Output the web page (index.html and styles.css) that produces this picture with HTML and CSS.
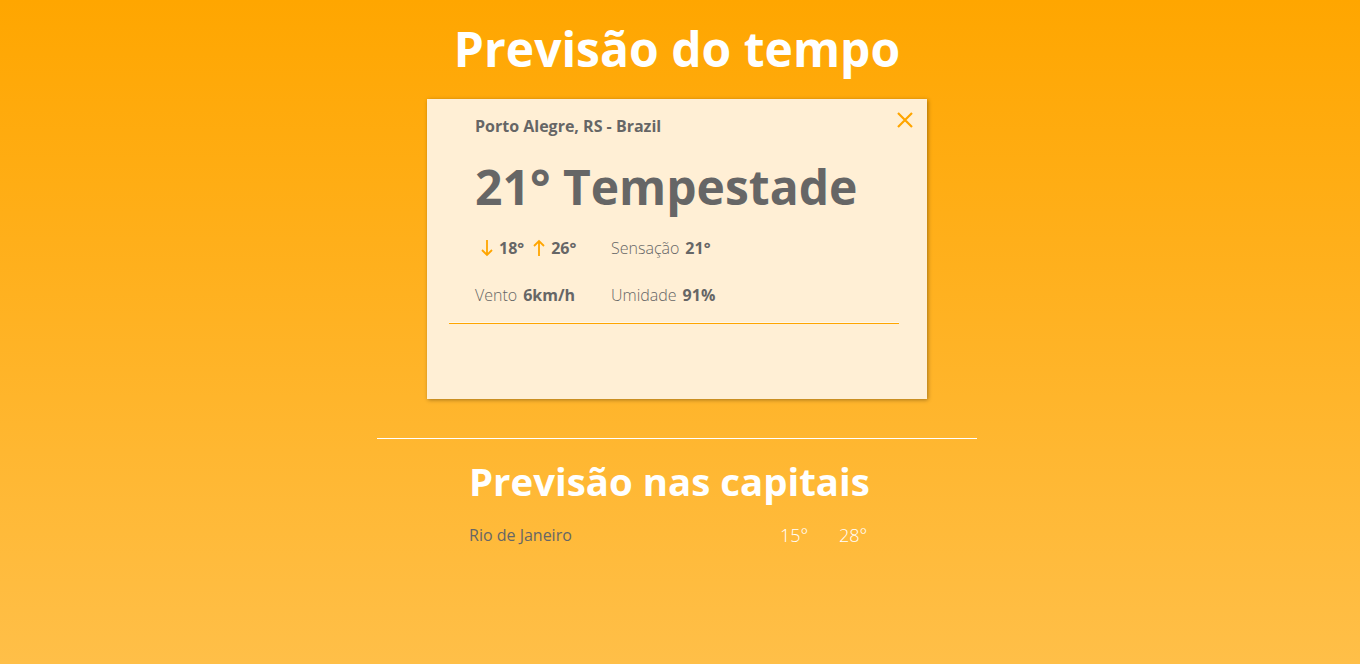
FILE: index.html
```html
<!DOCTYPE html>
<html lang="pt-BR">
<head>
<meta charset="utf-8">
<title>Previsão do tempo</title>
<link rel="stylesheet" href="styles.css">
</head>
<body>
<main class="page">
  <h1 class="title">Previsão do tempo</h1>
  <section class="card">
    <div class="card-top">
      <div class="place">Porto Alegre, RS - Brazil</div>
      <button class="close" aria-label="Fechar">
        <svg width="18" height="18" viewBox="0 0 18 18"><path d="M2 2L16 16M16 2L2 16" stroke="#ffa500" stroke-width="2.2" fill="none"/></svg>
      </button>
    </div>
    <div class="temp">21° Tempestade</div>
    <div class="details">
      <div class="cell">
        <svg class="arrow" width="12" height="18" viewBox="0 0 12 18"><path d="M6 1V16M1 11L6 16L11 11" stroke="#ffa500" stroke-width="1.8" fill="none"/></svg>
        <b>18°</b>
        <svg class="arrow arrow-up" width="12" height="18" viewBox="0 0 12 18"><path d="M6 17V2M1 7L6 2L11 7" stroke="#ffa500" stroke-width="1.8" fill="none"/></svg>
        <b>26°</b>
      </div>
      <div class="cell"><span class="label">Sensação</span> <b>21°</b></div>
      <div class="cell"><span class="label">Vento</span> <b>6km/h</b></div>
      <div class="cell"><span class="label">Umidade</span> <b>91%</b></div>
    </div>
    <div class="sep"></div>
  </section>
  <div class="divider"></div>
  <section class="capitals-section">
    <h2 class="subtitle">Previsão nas capitais</h2>
    <ul class="capitals">
      <li class="capital"><span class="city">Rio de Janeiro</span><span class="min">15°</span><span class="max">28°</span></li>
    </ul>
  </section>
</main>
</body>
</html>
```
FILE: styles.css
```css
html, body {
  margin: 0;
  padding: 0;
}
body {
  min-height: 100vh;
  background: linear-gradient(to bottom, #ffa600 0%, #ffbf48 100%);
  font-family: "Open Sans", "Liberation Sans", sans-serif;
  color: #666;
}
.page {
  display: flex;
  flex-direction: column;
  align-items: center;
  padding-top: 18px;
  padding-right: 6px;
}
.title {
  margin: 0;
  font-size: 48px;
  line-height: 62px;
  font-weight: 700;
  color: #fff;
}
.card {
  box-sizing: border-box;
  width: 500px;
  height: 300px;
  margin-top: 19px;
  background: #ffefd5;
  box-shadow: 1px 1px 4px rgba(0, 0, 0, 0.35);
  padding: 16px 0 0 48px;
  display: flex;
  flex-direction: column;
}
.card-top {
  display: flex;
  justify-content: space-between;
  align-items: flex-start;
  padding-right: 13px;
}
.place {
  font-size: 16px;
  font-weight: 700;
  line-height: 22px;
}
.close {
  border: 0;
  background: none;
  padding: 0;
  margin-top: -4px;
  width: 18px;
  height: 18px;
  cursor: pointer;
}
.close svg { display: block; }
.temp {
  margin-top: 22px;
  font-size: 48px;
  line-height: 56px;
  font-weight: 700;
}
.details {
  display: grid;
  grid-template-columns: 136px auto;
  row-gap: 25px;
  margin-top: 22px;
  font-size: 16px;
  line-height: 22px;
}
.cell {
  display: flex;
  align-items: center;
  gap: 6px;
}
.cell b { font-weight: 700; }
.arrow { display: block; margin-left: 6px; }
.arrow.arrow-up { margin-left: 3px; }
.label { font-weight: 300; }
.sep {
  margin: 17px 0 0 -26px;
  width: 450px;
  height: 1px;
  background: #ffa500;
  box-shadow: 0 -1px 0 #fff8ea;
}
.divider {
  width: 600px;
  height: 1px;
  background: #fff;
  margin-top: 39px;
}
.capitals-section {
  width: 416px;
}
.subtitle {
  margin: 17px 0 0;
  font-size: 38.4px;
  line-height: 50px;
  font-weight: 700;
  color: #fff;
}
.capitals {
  list-style: none;
  margin: 18px 0 0;
  padding: 0;
}
.capital {
  display: flex;
  font-size: 16px;
  line-height: 22px;
}
.city { width: 311px; color: #666; }
.min, .max {
  color: #fff;
  font-size: 18px;
  font-weight: 300;
}
.min { width: 59px; }
```
